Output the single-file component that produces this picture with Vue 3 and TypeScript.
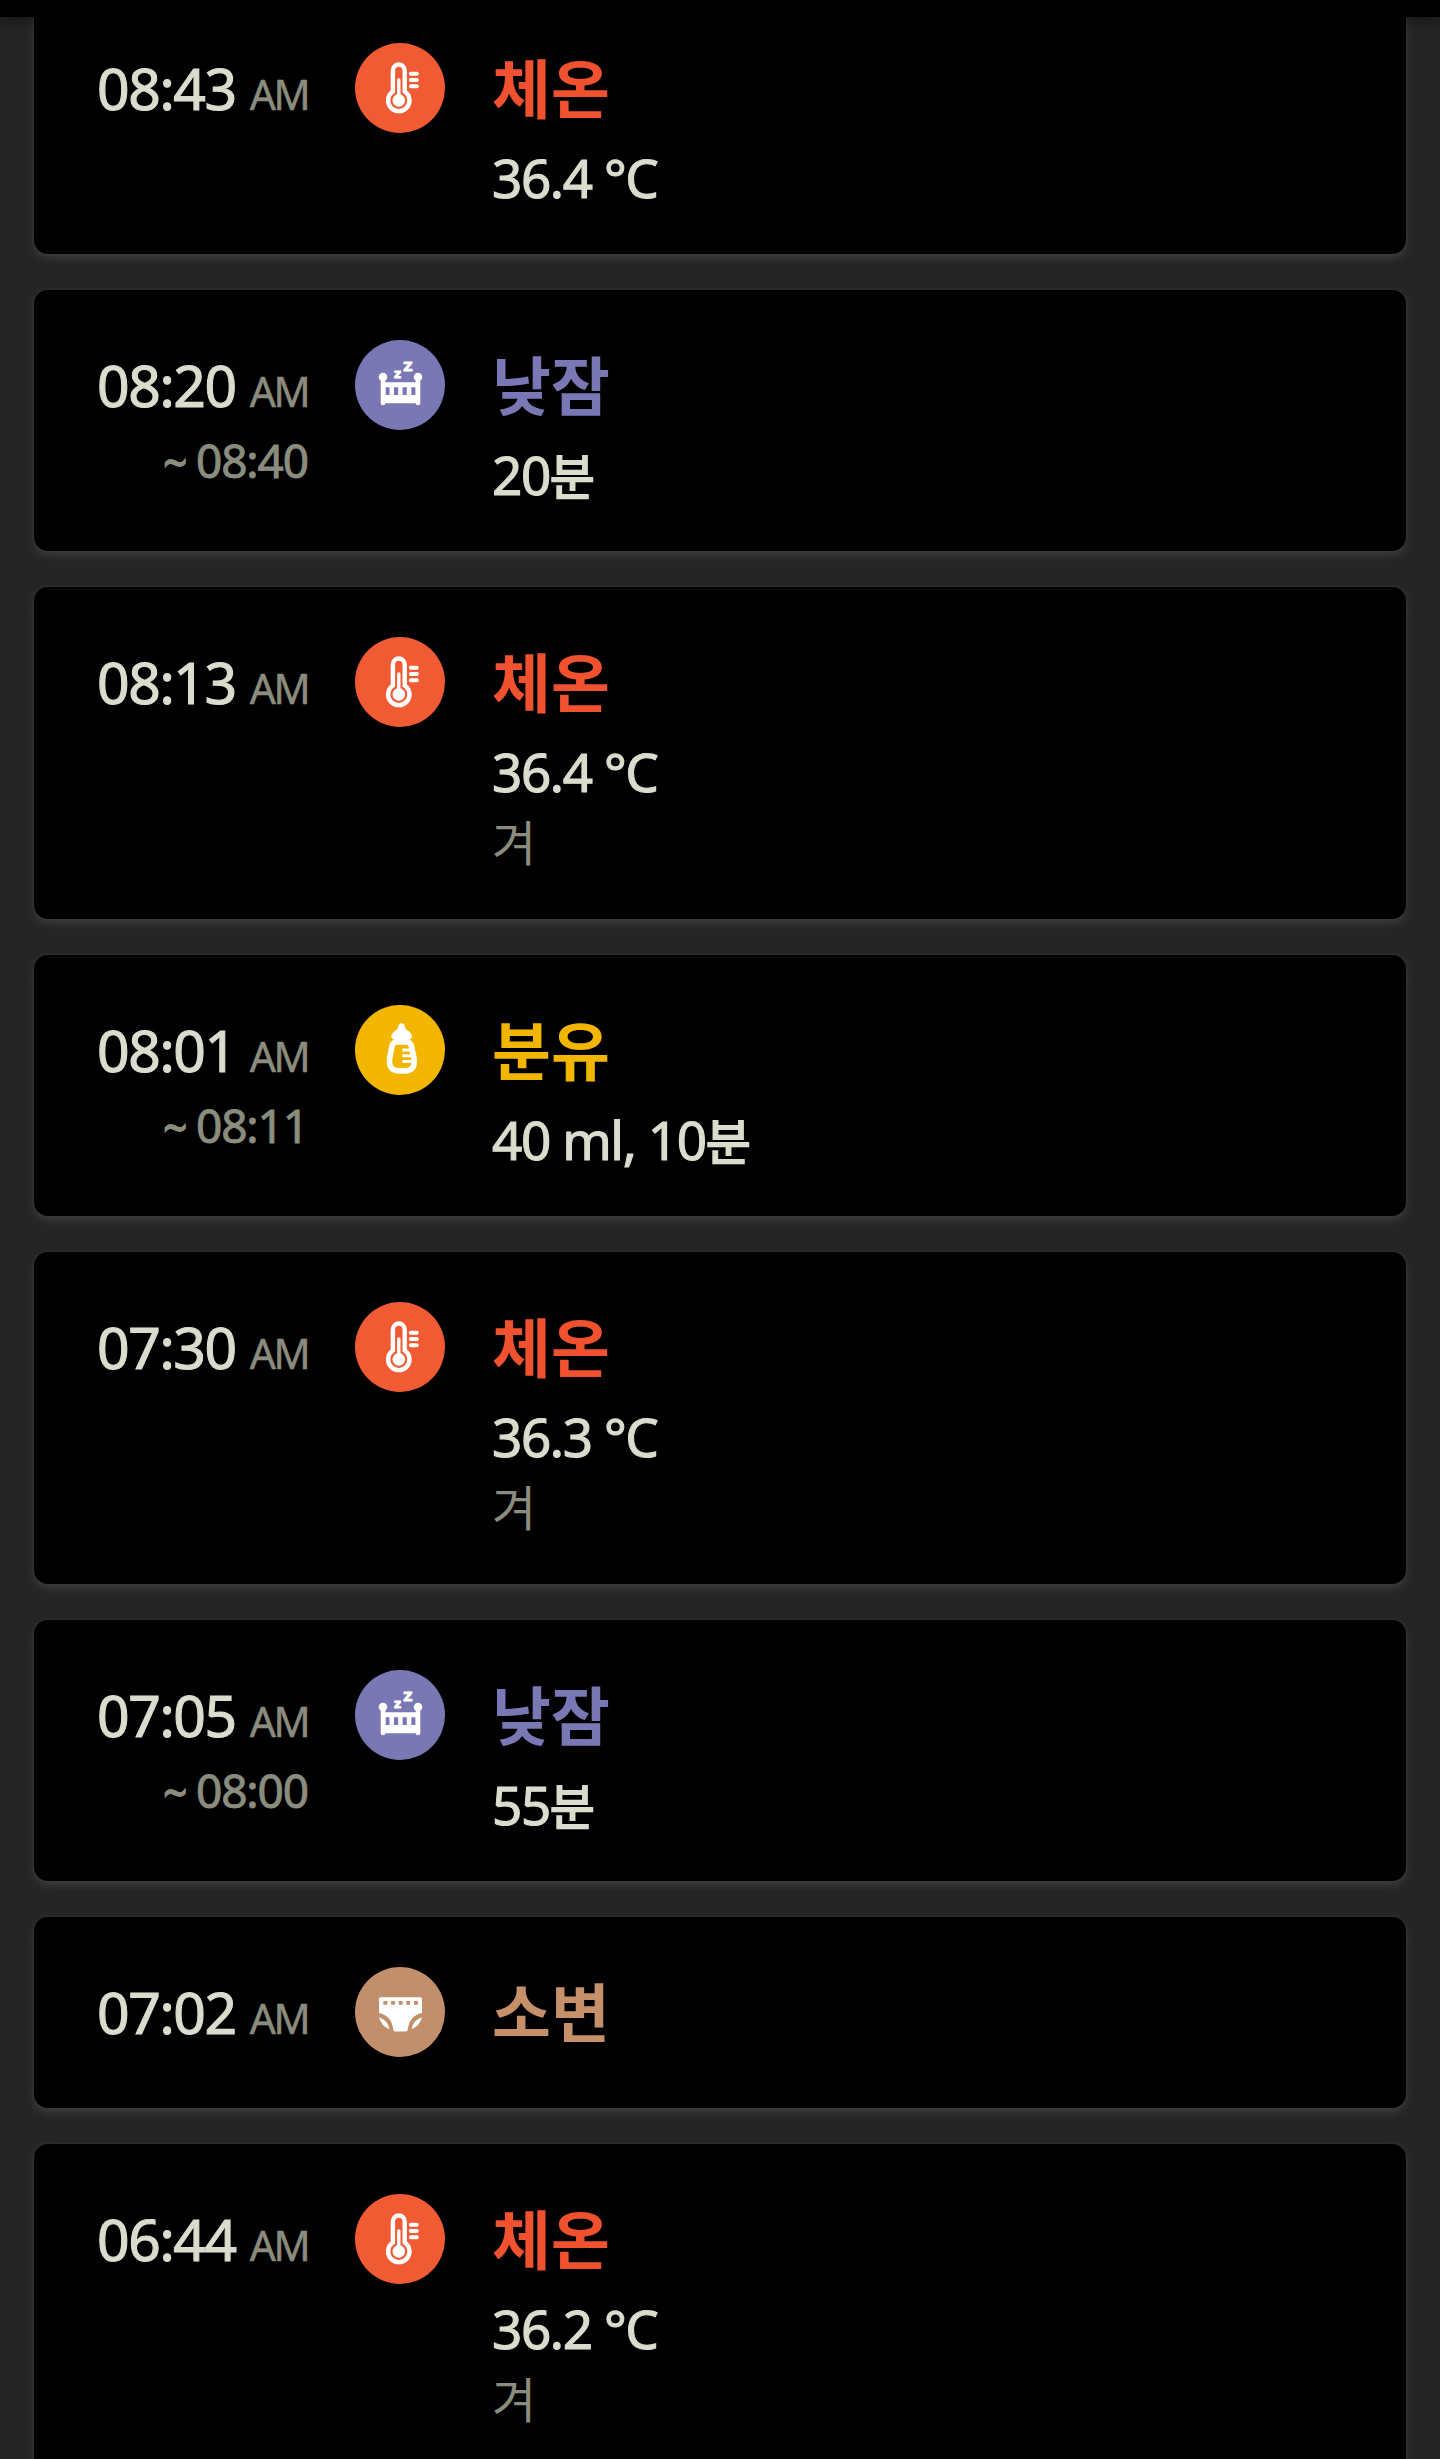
<script setup lang="ts">
type Kind = 'temperature' | 'nap' | 'formula' | 'pee'

interface Entry {
  time: string
  end?: string
  kind: Kind
  value?: string
  unit?: string
  memo?: string
}

const titles: Record<Kind, string> = {
  temperature: '체온',
  nap: '낮잠',
  formula: '분유',
  pee: '소변',
}

const entries: Entry[] = [
  { time: '08:43', kind: 'temperature', value: '36.4 °C' },
  { time: '08:20', end: '08:40', kind: 'nap', value: '20', unit: '분' },
  { time: '08:13', kind: 'temperature', value: '36.4 °C', memo: '겨' },
  { time: '08:01', end: '08:11', kind: 'formula', value: '40 ml, 10', unit: '분' },
  { time: '07:30', kind: 'temperature', value: '36.3 °C', memo: '겨' },
  { time: '07:05', end: '08:00', kind: 'nap', value: '55', unit: '분' },
  { time: '07:02', kind: 'pee' },
  { time: '06:44', kind: 'temperature', value: '36.2 °C', memo: '겨' },
]
</script>

<template>
  <main class="screen">
    <div class="topbar"></div>
    <section class="list">
      <article v-for="e in entries" :key="e.time" class="card" :class="e.kind">
        <div class="when">
          <div class="start"><span class="clock">{{ e.time }}</span><span class="ampm">AM</span></div>
          <div v-if="e.end" class="end"><span class="tilde">~</span>{{ e.end }}</div>
        </div>
        <svg class="icon" viewBox="0 0 90 90">
          <circle class="disc" cx="45" cy="45" r="45" />
          <g v-if="e.kind === 'temperature'">
            <path d="M37.9 48.5V27.4a5.9 5.9 0 0 1 11.8 0V48.5a10.7 10.7 0 1 1-11.8 0Z" fill="none" stroke="#fff" stroke-width="4.4" />
            <circle cx="43.8" cy="57.4" r="6.3" fill="#fff" />
            <path d="M43.8 56V37" stroke="#fff" stroke-width="3.4" stroke-linecap="round" />
            <path d="M55.8 30.8h6M55.8 37h6M55.8 43.2h6" stroke="#fff" stroke-width="3.9" stroke-linecap="round" />
          </g>
          <g v-else-if="e.kind === 'nap'" fill="#fff">
            <circle cx="28" cy="37" r="4.3" />
            <circle cx="63" cy="37" r="4.3" />
            <path fill-rule="evenodd" d="M25.7 38h4.6v4.2h30.4V38h4.6v25.4q0 1.8-2.3 1.8t-2.3-1.9H30.3q0 1.9-2.3 1.9t-2.3-1.8ZM30.7 47.3v7.8h3.8v-7.8ZM39 47.3v7.8h4.2v-7.8ZM47.6 47.3v7.8h4.2v-7.8ZM56.4 47.3v7.8h4v-7.8Z" />
            <text class="zee" x="39" y="38.1" font-size="12.2">z</text>
            <text class="zee" x="48.3" y="31.2" font-size="12.8">Z</text>
          </g>
          <g v-else-if="e.kind === 'formula'">
            <path d="M46.5 18.3q3 0 3.2 3.5q.2 2.6 3.3 3.9q2.8 1.3 2.9 3.4q1.7 1 1 3.2q-.6 2-2.600 2.300L54.500 38H38.500L39 34.600q-2.200-.3-2.700-2.300q-.5-2.200 1.200-3.200q.1-2.100 2.700-3.400q3-1.300 3.200-3.900q.200-3.500 3.100-3.500Z" fill="#fff" />
            <path d="M42 36.900H51q4.300 0 5.500 4.500L59 53q1.900 12.900-9 12.900H44q-11 0-9.300-12.900L37 41.400q1.200-4.500 5-4.500Z" fill="none" stroke="#fff" stroke-width="5.600" />
            <path d="M47.300 45h9.500M47.300 50.800h10.500M47.300 56.500h10.500" stroke="#fff" stroke-width="2.900" />
          </g>
          <g v-else>
            <path fill="#fff" fill-rule="evenodd" d="M25.500 30.200h40q1.500 0 1.500 1.500V46q-12.300 2.500-14.300 16.400q0 2-2 2H40.300q-2 0-2-2Q36.300 48.500 24 46V31.700q0-1.500 1.500-1.500ZM28.400 34v3.800h3.900V34ZM36.100 34v3.800H40V34ZM43.700 34v3.800h3.900V34ZM51.300 34v3.800h3.900V34ZM59 34v3.800h3.900V34Z" />
            <path fill="#fff" d="M24 50.300q8.500 2.700 10.600 12q-8.300-3-10.600-12ZM67 50.300q-8.500 2.700-10.600 12q8.300-3 10.600-12Z" />
          </g>
        </svg>
        <div class="body">
          <h2>{{ titles[e.kind] }}</h2>
          <div v-if="e.value" class="value">{{ e.value }}<span v-if="e.unit" class="unit">{{ e.unit }}</span></div>
          <div v-if="e.memo" class="memo">{{ e.memo }}</div>
        </div>
      </article>
    </section>
  </main>
</template>

<style>
body {
  background: #252525;
}
</style>

<style scoped>
.screen {
  height: 2459px;
  overflow: hidden;
  background: #252525;
  color: #dbdccd;
  font-family: "Noto Sans", "Noto Sans CJK KR", sans-serif;
}
.topbar {
  position: relative;
  z-index: 1;
  height: 17px;
  background: #000;
  box-shadow: 0 2px 16px rgba(0, 0, 0, 0.5);
}
.list {
  display: flex;
  flex-direction: column;
  gap: 36px;
  margin: -23.6px 34px 0;
}
.card {
  flex: none;
  box-sizing: border-box;
  display: flex;
  align-items: flex-start;
  min-height: 191px;
  padding: 50px 0 0 63px;
  border-radius: 14px;
  background: #000;
  box-shadow: 0 4px 8px #3e3e3e, 0 0 3px #303030;
}
.card:has(.value) {
  min-height: 261px;
}
.card:has(.memo) {
  min-height: 332px;
}
.when {
  width: 211px;
  display: flex;
  flex-direction: column;
  align-items: flex-end;
  white-space: nowrap;
}
.start {
  display: flex;
  align-items: baseline;
  justify-content: space-between;
  width: 211px;
  height: 90px;
  line-height: 90px;
}
.clock {
  font-size: 57px;
  letter-spacing: -1.4px;
  -webkit-text-stroke: 1.1px currentColor;
}
.ampm {
  color: #8a8d7e;
  font-size: 41px;
  letter-spacing: -2.6px;
  -webkit-text-stroke: 0.5px currentColor;
}
.end {
  height: 60px;
  line-height: 60px;
  color: #8a8d7e;
  font-size: 46px;
  letter-spacing: -1.1px;
  -webkit-text-stroke: 0.9px currentColor;
}
.tilde {
  margin-right: 10px;
  font-size: 41px;
  -webkit-text-stroke-width: 1.8px;
}
.icon {
  flex: none;
  width: 90px;
  height: 90px;
  margin-left: 47px;
}
.zee {
  font-family: "DejaVu Sans", sans-serif;
  font-weight: 700;
  stroke: #fff;
  stroke-width: 0.9px;
}
.body {
  margin-left: 47px;
  white-space: nowrap;
}
h2 {
  height: 90px;
  margin: 0;
  font-family: "Noto Sans CJK KR", sans-serif;
  font-size: 64px;
  font-weight: 700;
  line-height: 85px;
}
.value {
  height: 76px;
  font-size: 53px;
  line-height: 89px;
  letter-spacing: -1.4px;
  -webkit-text-stroke: 1.1px currentColor;
}
.unit {
  font-family: "Noto Sans CJK KR", sans-serif;
  font-size: 49px;
  line-height: 1;
  -webkit-text-stroke-width: 1.8px;
}
.memo {
  color: #8a8d7e;
  font-family: "Noto Sans CJK KR", sans-serif;
  font-size: 48px;
  line-height: 74px;
}
.temperature .disc { fill: #f15b34; }
.temperature h2 { color: #f0522f; }
.nap .disc { fill: #7977b4; }
.nap h2 { color: #7977b4; }
.formula .disc { fill: #f3b600; }
.formula h2 { color: #f3b600; }
.pee .disc { fill: #c18f6b; }
.pee h2 { color: #c6906a; }
</style>
